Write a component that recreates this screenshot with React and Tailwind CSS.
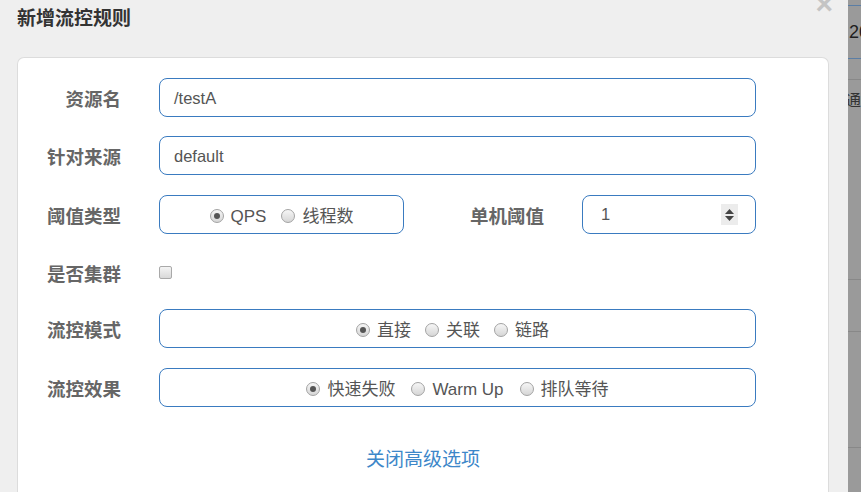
import React from "react";

function Radio({ checked, label }) {
  return (
    <label className="flex items-center">
      <span className="w-[14px] h-[14px] rounded-full border border-[#a3a3a3] bg-gradient-to-b from-[#f6f6f6] to-[#d6d6d6] flex items-center justify-center shrink-0 mt-[2px]">
        {checked && <span className="w-[6px] h-[6px] rounded-full bg-[#555]" />}
      </span>
      <span className="ml-[7px] pt-[4px]">{label}</span>
    </label>
  );
}

function Label({ children, className = "" }) {
  return (
    <div className={"text-right font-bold text-[18.5px] text-[#666] pt-[5px] " + className}>{children}</div>
  );
}

const box = "h-[39px] border border-[#3a7bc0] rounded-[8px] bg-white";

export default function App() {
  return (
    <div
      className="w-[861px] h-[492px] overflow-hidden flex"
      style={{ fontFamily: '"Liberation Sans", "Noto Sans CJK SC", sans-serif' }}
    >
      <div className="w-[848px] h-full bg-[#efefef] relative flex flex-col">
        <div className="absolute right-[15px] top-[-11px] text-[30px] leading-none font-bold text-[#c4c4c4]">×</div>
        <div className="pl-[17px] pt-[5px] h-[57px] text-[19px] font-bold text-[#333] leading-[28px]">新增流控规则</div>
        <div className="ml-[17px] w-[812px] flex-1 bg-white border border-[#dcdcdc] border-b-0 rounded-t-[7px] pt-[20px] text-[#555]">
          <div className="flex items-center">
            <Label className="w-[103px]">资源名</Label>
            <div className={box + " ml-[38px] w-[597px] flex items-center pl-[14px] pt-[2px] text-[16.5px]"}>/testA</div>
          </div>
          <div className="flex items-center mt-[19px]">
            <Label className="w-[103px]">针对来源</Label>
            <div className={box + " ml-[38px] w-[597px] flex items-center pl-[14px] pt-[2px] text-[16.5px]"}>default</div>
          </div>
          <div className="flex items-center mt-[20px]">
            <Label className="w-[103px]">阈值类型</Label>
            <div className={box + " ml-[38px] w-[245px] flex items-center justify-center gap-[15px] text-[17px]"}>
              <Radio checked label="QPS" />
              <Radio label="线程数" />
            </div>
            <Label className="w-[140px]">单机阈值</Label>
            <div className={box + " ml-[38px] w-[174px] flex items-center pl-[18px] pr-[17px] text-[16.5px] justify-between"}>
              <span className="pb-[1px]">1</span>
              <span className="w-[17px] h-[21px] bg-[#ececec] flex flex-col items-center justify-center gap-[2px]">
                <svg width="9" height="5" viewBox="0 0 9 5"><path d="M0 5 L4.5 0 L9 5 Z" fill="#444" /></svg>
                <svg width="9" height="5" viewBox="0 0 9 5"><path d="M0 0 L4.5 5 L9 0 Z" fill="#444" /></svg>
              </span>
            </div>
          </div>
          <div className="flex items-center mt-[19px] h-[39px]">
            <Label className="w-[103px]">是否集群</Label>
            <span className="ml-[38px] w-[13px] h-[13px] rounded-[2px] border border-[#a9a9a9] bg-gradient-to-b from-[#f4f4f4] to-[#d9d9d9]" />
          </div>
          <div className="flex items-center mt-[17px]">
            <Label className="w-[103px]">流控模式</Label>
            <div className={box + " ml-[38px] w-[597px] flex items-center justify-center gap-[14px] text-[17px] pr-[10px]"}>
              <Radio checked label="直接" />
              <Radio label="关联" />
              <Radio label="链路" />
            </div>
          </div>
          <div className="flex items-center mt-[20px]">
            <Label className="w-[103px]">流控效果</Label>
            <div className={box + " ml-[38px] w-[597px] flex items-center justify-center gap-[16px] text-[17px]"}>
              <Radio checked label="快速失败" />
              <Radio label="Warm Up" />
              <Radio label="排队等待" />
            </div>
          </div>
          <div className="mt-[40px] text-center text-[19px] text-[#3d87c9] leading-[26px]">关闭高级选项</div>
        </div>
      </div>
      <div className="w-[13px] h-full bg-[#9a9a9a] overflow-hidden flex flex-col">
        <div className="h-[5px]" />
        <div className="h-[53px] border-t border-[#5b7ea5] flex items-center text-[#1e1e1e] text-[18px] whitespace-nowrap pl-[1px]">20</div>
        <div className="h-[21px] border-t border-[#5b7ea5]" />
        <div className="h-[200px] border-t border-[#888] pt-[9px] text-[16px] text-[#333] whitespace-nowrap -ml-[3px]">通道</div>
        <div className="h-[52px] border-t border-[#888]" />
        <div className="h-[116px] border-t border-[#888]" />
        <div className="flex-1 border-t border-[#888]" />
      </div>
    </div>
  );
}
